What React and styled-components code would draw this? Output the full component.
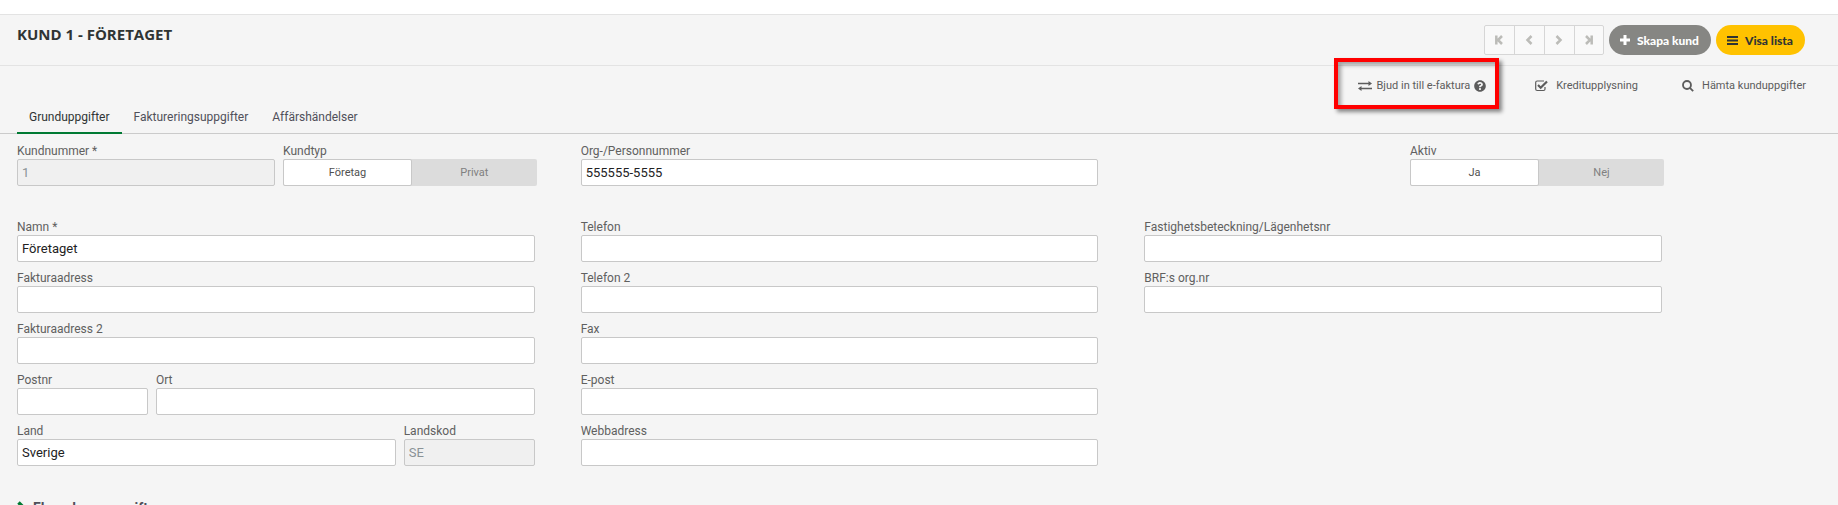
/** Modules */
import React, { Component } from 'react';
import styled, { createGlobalStyle } from 'styled-components';
import { FaQuestionCircle } from 'react-icons/fa';

const GlobalStyle = createGlobalStyle`
    * {
        box-sizing: border-box;
    }

    body {
        margin: 0;
        background: #f5f5f5;
        color: #606060;
        font-family: Roboto, sans-serif;
        font-size: 12px;
        overflow: hidden;
    }

    button,
    input {
        font-family: inherit;
    }
`

const TopStrip = styled.div`
    height: 15px;
    background: #fff;
    border-bottom: 1px solid #e3e3e3;
`

const Header = styled.header`
    display: flex;
    align-items: flex-start;
    justify-content: space-between;
    height: 51px;
    padding: 10px 33px 0 17px;
    border-bottom: 1px solid #e3e3e3;
`

const Title = styled.h1`
    margin: 0;
    color: #2f3434;
    font-family: "Open Sans", sans-serif;
    font-size: 15px;
    font-weight: 700;
    line-height: 18px;
`

const HeaderActions = styled.div`
    display: flex;
    gap: 5px;
`

const Pager = styled.div`
    display: flex;
    height: 30px;
    border: 1px solid #d6d6d6;
    border-radius: 2px;
    background: #f9f9f9;
`

const PagerButton = styled.button`
    display: flex;
    align-items: center;
    justify-content: center;
    width: 30px;
    padding: 0;
    border: 0;
    border-right: 1px solid #d6d6d6;
    background: none;
    color: #bcbcb8;

    &:last-child {
        width: 28px;
        border-right: 0;
    }
`

const PillButton = styled.button`
    display: flex;
    align-items: center;
    gap: 7px;
    height: 30px;
    padding: 0 12px 0 11px;
    border: 0;
    border-radius: 15px;
    background: ${props => props.$primary ? '#ffc200' : '#868683'};
    color: ${props => props.$primary ? '#2f3434' : '#fff'};
    font-family: Lato, sans-serif;
    font-size: 12px;
    font-weight: 900;
`

const Actions = styled.div`
    display: flex;
    align-items: flex-start;
    justify-content: flex-end;
    height: 40px;
    padding-right: 32px;
`

const Action = styled.a`
    display: flex;
    align-items: center;
    gap: ${props => props.$tight ? '4px' : '8px'};
    height: 40px;
    margin-left: 44px;
    color: #5c5c5c;
    font-size: 11px;
    line-height: 16px;
    text-decoration: none;
`

const Highlight = styled.div`
    display: flex;
    align-items: center;
    height: 51px;
    margin: -8px -8px 0 0;
    padding: 4px 9px 0 20px;
    border: 4px solid #f00;
    box-shadow: 3px 3px 4px rgba(0, 0, 0, 0.45), inset 3px 3px 4px rgba(0, 0, 0, 0.35);

    ${Action} {
        margin-left: 0;
    }
`

const Tabs = styled.nav`
    display: flex;
    height: 28px;
    padding-left: 17px;
    border-bottom: 1px solid #cbcbcb;
`

const Tab = styled.a`
    height: 28px;
    padding: 3px 12px 0;
    border-bottom: 2px solid ${props => props.$active ? '#007a33' : 'transparent'};
    color: ${props => props.$active ? '#2f3434' : '#50505a'};
    line-height: 16px;
    text-decoration: none;
`

const Form = styled.form`
    padding: 8px 176px 0 17px;
`

const Columns = styled.div`
    display: grid;
    grid-template-columns: repeat(3, 1fr);
    gap: 46px;
    margin-bottom: 32px;
`

const Column = styled.div`
    display: flex;
    flex-direction: column;
    gap: 7px;
`

const Row = styled.div`
    display: grid;
    grid-template-columns: ${props => props.$columns};
    gap: 8px;
`

const Field = styled.div`
    min-width: 0;
`

const Label = styled.label`
    display: block;
    height: 17px;
    line-height: 18px;
`

const Input = styled.input`
    display: block;
    width: 100%;
    height: 27px;
    padding: 0 4px;
    border: 1px solid #c8c8c8;
    border-radius: 2px;
    background: #fff;
    color: #222;
    font-size: 13px;

    &:disabled {
        background: #f0f0f0;
        color: #8a9296;
    }
`

const Toggle = styled.fieldset`
    width: ${props => props.$right ? '254px' : 'auto'};
    min-width: 0;
    margin: 0 -2px 0 ${props => props.$right ? 'auto' : '0'};
    padding: 0;
    border: 0;
`

const Legend = styled.legend`
    height: 17px;
    padding: 0;
    line-height: 18px;
`

const Options = styled.div`
    display: grid;
    grid-template-columns: 129px 1fr;
    height: 27px;
    border-radius: 2px;
    background: #dcdcdc;
`

const Option = styled.label`
    display: flex;
    align-items: center;
    justify-content: center;
    border: 1px solid transparent;
    border-radius: 2px;
    color: #808080;
    font-size: 11px;

    &:has(input:checked) {
        border-color: #c8c8c8;
        background: #fff;
        color: #505050;
    }

    input {
        width: 0;
        height: 0;
        margin: 0;
        appearance: none;
    }
`

const MoreButton = styled.button`
    display: flex;
    align-items: center;
    gap: 7px;
    padding: 0;
    border: 0;
    background: none;
    color: #50505a;
    font-size: 14px;
    font-weight: 700;
    line-height: 20px;

    svg {
        color: #007a33;
    }
`

const StepIcon = ({ last }) => (
    <svg width="8" height="10" viewBox="0 0 8 10" fill="none" stroke="currentColor" strokeWidth="2.500">
        {last
            ? <path d="M1 1l4 4-4 4M6.700 .5v9" />
            : <path d="M7 1L3 5l4 4M1.300 .5v9" />
        }
    </svg>
)

const ArrowIcon = ({ next }) => (
    <svg width="8" height="10" viewBox="0 0 8 10" fill="none" stroke="currentColor" strokeWidth="2.500">
        <path d={next ? 'M1.500 1l4 4-4 4' : 'M6.500 1l-4 4 4 4'} />
    </svg>
)

const PlusIcon = () => (
    <svg width="10" height="10" viewBox="0 0 10 10" fill="currentColor">
        <path d="M3.500 0h3v3.500H10v3H6.500V10h-3V6.500H0v-3h3.500z" />
    </svg>
)

const BarsIcon = () => (
    <svg width="11" height="9" viewBox="0 0 11 9" fill="currentColor">
        <path d="M0 0h11v2H0zM0 3.500h11v2H0zM0 7h11v2H0z" />
    </svg>
)

const ExchangeIcon = () => (
    <svg width="14" height="10" viewBox="0 0 14 10" fill="currentColor">
        <path d="M0 1.700h10.500V0L14 2.500 10.500 5V3.300H0zM14 6.700H3.500V5L0 7.500 3.500 10V8.300H14z" />
    </svg>
)

const CheckIcon = () => (
    <svg width="13" height="12" viewBox="0 0 13 12" fill="none" stroke="currentColor">
        <path d="M9 1H2.200Q.7 1 .7 2.500V9Q.7 10.500 2.200 10.500H8.500Q10 10.500 10 9V7" strokeWidth="1.200" />
        <path d="M3 5l2.700 2.700L12 1.500" strokeWidth="2.200" />
    </svg>
)

const SearchIcon = () => (
    <svg width="12" height="12" viewBox="0 0 13 13" fill="none" stroke="currentColor" strokeWidth="2">
        <circle cx="5.400" cy="5.400" r="4.300" />
        <path d="M8.500 8.500l3.600 3.600" />
    </svg>
)

const ExpandIcon = () => (
    <svg width="9" height="14" viewBox="0 0 9 14" fill="none" stroke="currentColor" strokeWidth="3.500">
        <path d="M1.500 1.500L7 7l-5.500 5.500" />
    </svg>
)

class TextField extends Component {
    render() {
        const { props: { id, label, value, disabled } } = this;

        return (
            <Field>
                <Label htmlFor={id}>{label}</Label>
                <Input id={id} type="text" defaultValue={value} disabled={disabled} />
            </Field>
        )
    }
}

class Switch extends Component {
    render() {
        const { props: { name, label, options, right } } = this;

        return (
            <Toggle $right={right}>
                <Legend>{label}</Legend>
                <Options>
                    {options.map((option, index) => (
                        <Option key={option}>
                            <input type="radio" name={name} defaultChecked={index === 0} />
                            {option}
                        </Option>
                    ))}
                </Options>
            </Toggle>
        )
    }
}

class App extends Component {
    renderHeader = () => (
        <Header>
            <Title>KUND 1 - FÖRETAGET</Title>
            <HeaderActions>
                <Pager>
                    <PagerButton aria-label="Första"><StepIcon /></PagerButton>
                    <PagerButton aria-label="Föregående"><ArrowIcon /></PagerButton>
                    <PagerButton aria-label="Nästa"><ArrowIcon next /></PagerButton>
                    <PagerButton aria-label="Sista"><StepIcon last /></PagerButton>
                </Pager>
                <PillButton><PlusIcon />Skapa kund</PillButton>
                <PillButton $primary><BarsIcon />Visa lista</PillButton>
            </HeaderActions>
        </Header>
    )

    renderActions = () => (
        <Actions>
            <Highlight>
                <Action href="#faktura" $tight>
                    <ExchangeIcon />
                    Bjud in till e-faktura
                    <FaQuestionCircle size={12} />
                </Action>
            </Highlight>
            <Action href="#kredit"><CheckIcon />Kreditupplysning</Action>
            <Action href="#hamta"><SearchIcon />Hämta kunduppgifter</Action>
        </Actions>
    )

    render() {
        return (
            <>
                <GlobalStyle />
                <TopStrip />
                {this.renderHeader()}
                {this.renderActions()}
                <Tabs>
                    <Tab href="#grund" $active>Grunduppgifter</Tab>
                    <Tab href="#fakturering">Faktureringsuppgifter</Tab>
                    <Tab href="#affar">Affärshändelser</Tab>
                </Tabs>
                <Form>
                    <Columns>
                        <Row $columns="258px 1fr">
                            <TextField id="kundnummer" label="Kundnummer *" value="1" disabled />
                            <Switch name="kundtyp" label="Kundtyp" options={['Företag', 'Privat']} />
                        </Row>
                        <TextField id="orgnr" label="Org-/Personnummer" value="555555-5555" />
                        <Switch name="aktiv" label="Aktiv" options={['Ja', 'Nej']} right />
                    </Columns>
                    <Columns>
                        <Column>
                            <TextField id="namn" label="Namn *" value="Företaget" />
                            <TextField id="adress" label="Fakturaadress" />
                            <TextField id="adress2" label="Fakturaadress 2" />
                            <Row $columns="131px 1fr">
                                <TextField id="postnr" label="Postnr" />
                                <TextField id="ort" label="Ort" />
                            </Row>
                            <Row $columns="1fr 131px">
                                <TextField id="land" label="Land" value="Sverige" />
                                <TextField id="landskod" label="Landskod" value="SE" disabled />
                            </Row>
                        </Column>
                        <Column>
                            <TextField id="telefon" label="Telefon" />
                            <TextField id="telefon2" label="Telefon 2" />
                            <TextField id="fax" label="Fax" />
                            <TextField id="epost" label="E-post" />
                            <TextField id="webb" label="Webbadress" />
                        </Column>
                        <Column>
                            <TextField id="fastighet" label="Fastighetsbeteckning/Lägenhetsnr" />
                            <TextField id="brf" label="BRF:s org.nr" />
                        </Column>
                    </Columns>
                    <MoreButton type="button"><ExpandIcon />Fler adressuppgifter</MoreButton>
                </Form>
            </>
        );
    }
}

export default App;
